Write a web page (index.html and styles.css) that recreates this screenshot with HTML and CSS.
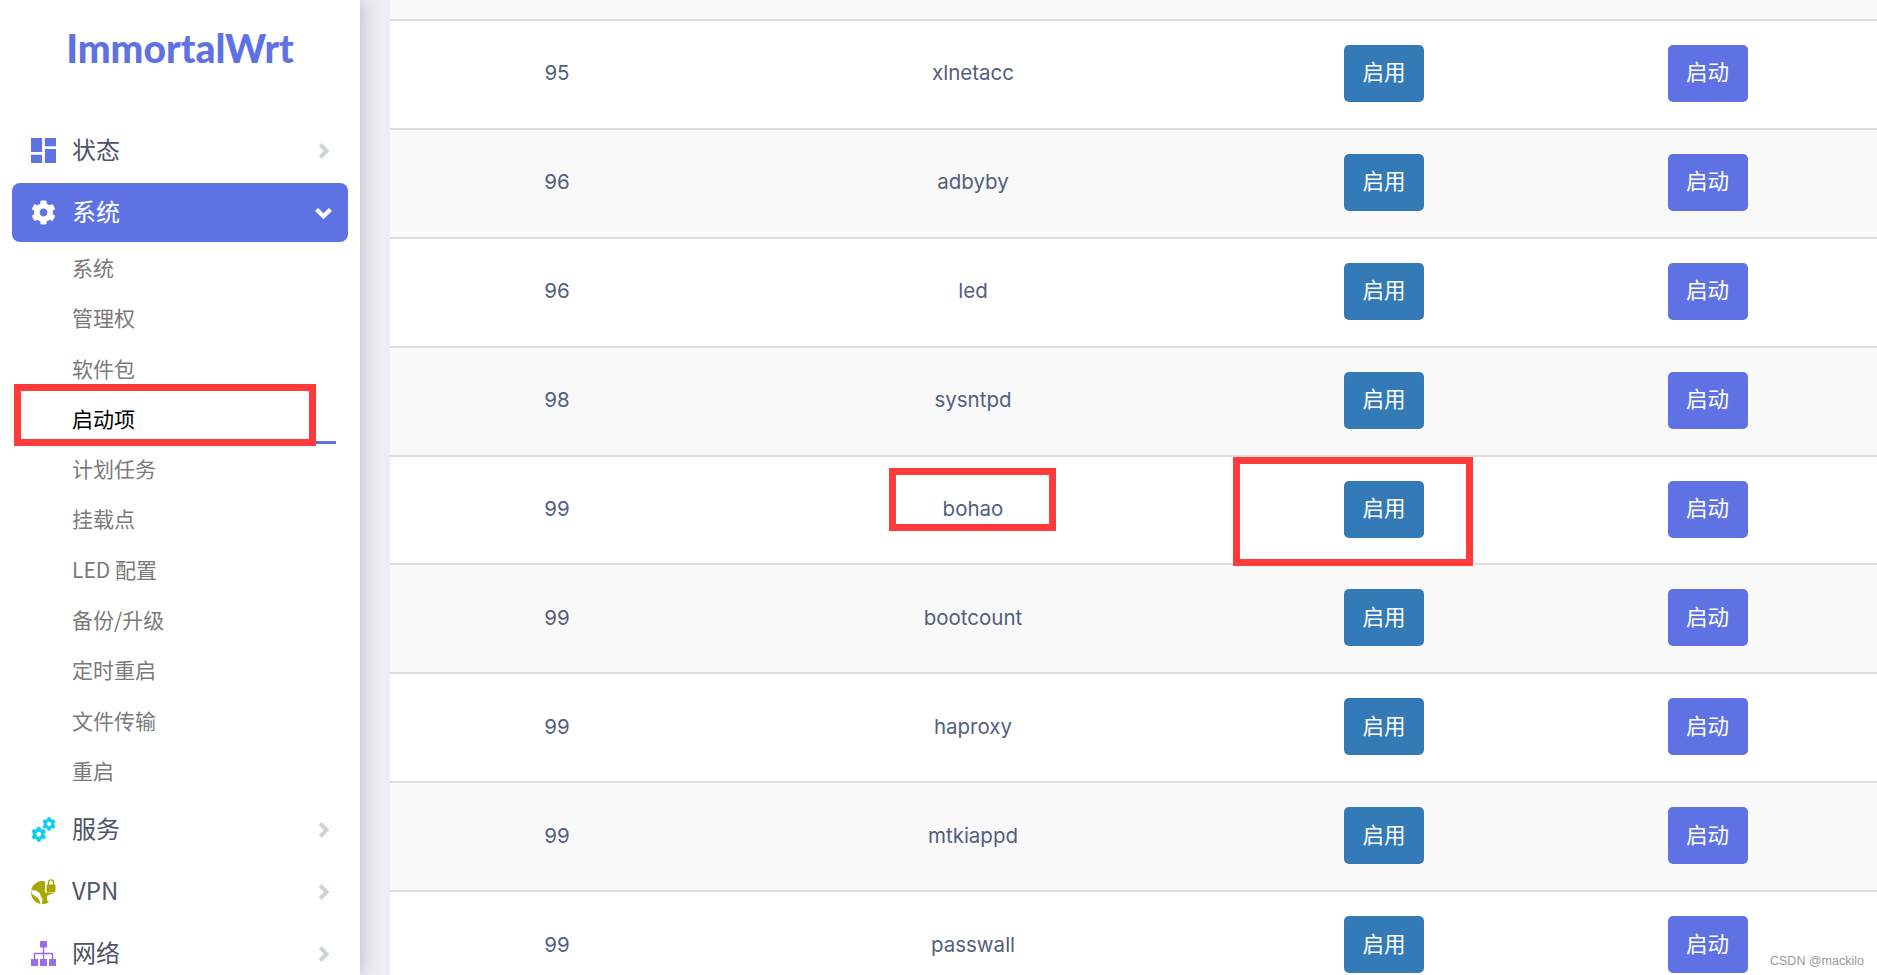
FILE: index.html
```html
<!DOCTYPE html>
<html lang="zh-CN">
<head>
    <meta charset="UTF-8">
    <title>ImmortalWrt - 启动项</title>
    <link rel="stylesheet" href="styles.css">
</head>
<body>

<svg class="defs" width="0" height="0">
    <symbol id="cog" viewBox="0 0 512 512">
        <path d="M487.4 315.7l-42.6-24.6c4.3-23.2 4.3-47 0-70.2l42.6-24.6c4.9-2.8 7.1-8.6 5.5-14-11.1-35.6-30-67.8-54.7-94.6-3.8-4.1-10-5.1-14.8-2.3L380.8 110c-17.9-15.4-38.5-27.3-60.8-35.1V25.8c0-5.6-3.9-10.5-9.4-11.7-36.7-8.2-74.3-7.8-109.2 0-5.5 1.2-9.4 6.1-9.4 11.7V75c-22.2 7.9-42.8 19.8-60.8 35.1L88.7 85.5c-4.9-2.8-11-1.9-14.8 2.3-24.7 26.7-43.6 58.9-54.7 94.6-1.7 5.4.6 11.2 5.5 14L67.3 221c-4.3 23.2-4.3 47 0 70.2l-42.6 24.6c-4.9 2.8-7.1 8.6-5.5 14 11.1 35.6 30 67.8 54.7 94.6 3.8 4.1 10 5.1 14.8 2.3l42.6-24.6c17.9 15.4 38.5 27.3 60.8 35.1v49.2c0 5.6 3.9 10.5 9.4 11.7 36.7 8.2 74.3 7.8 109.2 0 5.5-1.2 9.4-6.1 9.4-11.7v-49.2c22.2-7.9 42.8-19.8 60.8-35.1l42.6 24.6c4.9 2.8 11 1.9 14.8-2.3 24.7-26.7 43.6-58.9 54.7-94.6 1.5-5.5-.7-11.3-5.6-14.1zM256 336c-44.1 0-80-35.9-80-80s35.9-80 80-80 80 35.9 80 80-35.9 80-80 80z"/>
    </symbol>
    <symbol id="chevron-right" viewBox="0 0 11 16">
        <path d="M2.2 1.5L8.6 8l-6.4 6.5" fill="none" stroke="currentColor" stroke-width="4"/>
    </symbol>
</svg>

<div class="container">
    <div class="sidebar">
        <div class="logo">ImmortalWrt</div>

        <div class="menu-item">
            <svg class="menu-icon icon-status" viewBox="3 3 18 18"><path d="M3 13h8V3H3v10zm0 8h8v-6H3v6zm10 0h8V11h-8v10zm0-18v6h8V3h-8z"/></svg>
            <span class="menu-label">状态</span>
            <svg class="menu-arrow"><use href="#chevron-right"/></svg>
        </div>

        <div class="menu-item active">
            <svg class="menu-icon"><use href="#cog"/></svg>
            <span class="menu-label">系统</span>
            <svg class="menu-arrow-down" viewBox="0 0 16 11"><path d="M1.5 2.2L8 8.6l6.5-6.4" fill="none" stroke="currentColor" stroke-width="4"/></svg>
        </div>

        <div class="submenu">
            <div class="submenu-item">系统</div>
            <div class="submenu-item">管理权</div>
            <div class="submenu-item">软件包</div>
            <div class="submenu-item current">启动项</div>
            <div class="submenu-item">计划任务</div>
            <div class="submenu-item">挂载点</div>
            <div class="submenu-item">LED 配置</div>
            <div class="submenu-item">备份/升级</div>
            <div class="submenu-item">定时重启</div>
            <div class="submenu-item">文件传输</div>
            <div class="submenu-item">重启</div>
        </div>

        <div class="menu-item">
            <svg class="menu-icon icon-services" viewBox="0 0 25 25">
                <use href="#cog" x="0" y="9.5" width="15.5" height="15.5"/>
                <use href="#cog" x="11" y="0" width="14" height="14"/>
            </svg>
            <span class="menu-label">服务</span>
            <svg class="menu-arrow"><use href="#chevron-right"/></svg>
        </div>

        <div class="menu-item">
            <svg class="menu-icon icon-vpn" viewBox="0 0 25 25">
                <circle cx="11.5" cy="13.5" r="11.5"/>
                <path class="cut" d="M0 11l6 1 3 2.500 1 3.500 1.500 2-.5 5H9.500L8 20l-3-2.500L1 15zM16 17l5-2.500h4v3.500l-5 4-3 1-1-2.500z"/>
                <rect class="cut" x="14" y="0" width="11" height="13.500"/>
                <rect x="15.500" y="5.500" width="9" height="7.500" rx="1"/>
                <path d="M17.500 6V3.300a2.500 2.500 0 0 1 5 0V6" fill="none" stroke="currentColor" stroke-width="1.300"/>
            </svg>
            <span class="menu-label">VPN</span>
            <svg class="menu-arrow"><use href="#chevron-right"/></svg>
        </div>

        <div class="menu-item">
            <svg class="menu-icon icon-network" viewBox="0 0 25 25">
                <rect x="9" y="0" width="7" height="6.500"/>
                <rect x="0" y="18" width="7" height="7"/>
                <rect x="9" y="18" width="7" height="7"/>
                <rect x="18" y="18" width="7" height="7"/>
                <path d="M12.500 6v12M3.500 18v-5.500h18V18" fill="none" stroke="currentColor" stroke-width="1.400"/>
            </svg>
            <span class="menu-label">网络</span>
            <svg class="menu-arrow"><use href="#chevron-right"/></svg>
        </div>
    </div>

    <div class="main">
        <div class="table">
            <div class="row row-stub"></div>
            <div class="row">
                <div class="cell">95</div>
                <div class="cell">xlnetacc</div>
                <div class="cell"><button class="btn btn-enable">启用</button></div>
                <div class="cell"><button class="btn btn-start">启动</button></div>
            </div>
            <div class="row">
                <div class="cell">96</div>
                <div class="cell">adbyby</div>
                <div class="cell"><button class="btn btn-enable">启用</button></div>
                <div class="cell"><button class="btn btn-start">启动</button></div>
            </div>
            <div class="row">
                <div class="cell">96</div>
                <div class="cell">led</div>
                <div class="cell"><button class="btn btn-enable">启用</button></div>
                <div class="cell"><button class="btn btn-start">启动</button></div>
            </div>
            <div class="row">
                <div class="cell">98</div>
                <div class="cell">sysntpd</div>
                <div class="cell"><button class="btn btn-enable">启用</button></div>
                <div class="cell"><button class="btn btn-start">启动</button></div>
            </div>
            <div class="row">
                <div class="cell">99</div>
                <div class="cell">bohao</div>
                <div class="cell"><button class="btn btn-enable">启用</button></div>
                <div class="cell"><button class="btn btn-start">启动</button></div>
            </div>
            <div class="row">
                <div class="cell">99</div>
                <div class="cell">bootcount</div>
                <div class="cell"><button class="btn btn-enable">启用</button></div>
                <div class="cell"><button class="btn btn-start">启动</button></div>
            </div>
            <div class="row">
                <div class="cell">99</div>
                <div class="cell">haproxy</div>
                <div class="cell"><button class="btn btn-enable">启用</button></div>
                <div class="cell"><button class="btn btn-start">启动</button></div>
            </div>
            <div class="row">
                <div class="cell">99</div>
                <div class="cell">mtkiappd</div>
                <div class="cell"><button class="btn btn-enable">启用</button></div>
                <div class="cell"><button class="btn btn-start">启动</button></div>
            </div>
            <div class="row">
                <div class="cell">99</div>
                <div class="cell">passwall</div>
                <div class="cell"><button class="btn btn-enable">启用</button></div>
                <div class="cell"><button class="btn btn-start">启动</button></div>
            </div>
        </div>
    </div>
</div>

<!-- red boxes drawn over the screenshot -->
<div class="mark mark-menu"></div>
<div class="mark mark-name"></div>
<div class="mark mark-btn"></div>
<div class="watermark">CSDN @mackilo</div>

</body>
</html>
```

FILE: styles.css
```css
html, body {
    height: 100%;
    margin: 0;
    overflow: hidden;
}
body {
    background-color: #fff;
    font-family: Inter, "Noto Sans CJK SC", sans-serif;
    color: #525f7f;
}
.defs {
    position: absolute;
}
.container {
    display: flex;
    height: 975px;
}

/* sidebar */
.sidebar {
    flex: 0 0 360px;
    height: 975px;
    box-sizing: border-box;
    padding: 0 12px;
    background-color: #fff;
    box-shadow: 0 0 18px rgba(70, 70, 90, 0.35);
    position: relative;
    z-index: 1;
    clip-path: inset(0 -30px 0 0);
}
.logo {
    height: 118px;
    padding-top: 24px;
    box-sizing: border-box;
    text-align: center;
    font-family: Lato, sans-serif;
    font-weight: 900;
    font-size: 39px;
    line-height: 49px;
    color: #5e72e4;
}
.menu-item {
    display: flex;
    align-items: center;
    height: 59px;
    margin: 3px 0 0;
    padding: 0 19px;
    border-radius: 8px;
    font-family: "Noto Sans CJK SC", Inter, sans-serif;
    font-size: 24px;
    color: #4d5468;
}
.menu-item.active {
    background-color: #5e72e4;
    color: #fff;
}
.menu-icon {
    width: 25px;
    height: 25px;
    fill: currentColor;
    flex: none;
}
.icon-status {
    color: #5e72e4;
}
.icon-services {
    color: #11cdef;
}
.icon-vpn {
    color: #a8a800;
}
.icon-vpn .cut {
    fill: #fff;
}
.icon-network {
    color: #9a6ee6;
}
.menu-label {
    flex: 1;
    margin-left: 16px;
    padding-bottom: 4px;
    line-height: 30px;
}
.menu-arrow {
    width: 11px;
    height: 16px;
    color: #ced4da;
}
.menu-arrow-down {
    width: 17px;
    height: 12px;
    color: #fff;
    margin-right: -3px;
}
.submenu {
    padding: 1px 0 1px 60px;
}
.submenu-item {
    height: 50.3px;
    line-height: 48px;
    font-family: "Noto Sans CJK SC", Inter, sans-serif;
    font-size: 21px;
    color: #7a7a7a;
}
.submenu-item.current {
    color: #000;
    position: relative;
}
.submenu-item.current::after {
    content: "";
    position: absolute;
    left: 0;
    right: 12px;
    bottom: 0;
    height: 3px;
    background-color: #5e72e4;
}

/* table */
.main {
    flex: 1;
    padding-left: 30px;
    background-color: #edeef2;
    overflow: hidden;
}
.table {
    background-color: #fff;
}
.row {
    display: grid;
    grid-template-columns: 334px 498px 324px 323px;
    padding-right: 8px;
    height: 108.9px;
    box-sizing: border-box;
    border-top: 2px solid #dedede;
    font-size: 20.5px;
}
.row:nth-child(odd) {
    background-color: #f9f9f9;
}
.row-stub {
    height: 19px;
    border-top: none;
}
.cell {
    display: flex;
    align-items: center;
    justify-content: center;
    padding-bottom: 2px;
}
.cell:nth-child(-n+2) {
    padding-bottom: 3px;
}
.btn {
    width: 80px;
    height: 57px;
    padding: 0 0 5px;
    border: none;
    border-radius: 5px;
    font-family: "Noto Sans CJK SC", Inter, sans-serif;
    font-size: 21.5px;
    color: #fff;
    cursor: pointer;
}
.btn-enable {
    background-color: #337ab7;
}
.btn-start {
    background-color: #5e72e4;
}

/* annotations */
.mark {
    position: absolute;
    box-sizing: border-box;
    border: 7px solid #ff3a3a;
    z-index: 2;
}
.mark-menu {
    left: 14px;
    top: 384px;
    width: 302px;
    height: 62px;
}
.mark-name {
    left: 889px;
    top: 468px;
    width: 167px;
    height: 63px;
}
.mark-btn {
    left: 1233px;
    top: 457px;
    width: 240px;
    height: 109px;
}
.watermark {
    position: absolute;
    left: 1770px;
    top: 952px;
    font-family: "Liberation Sans", sans-serif;
    font-size: 12.5px;
    line-height: 18px;
    color: #999;
    z-index: 2;
}
```
